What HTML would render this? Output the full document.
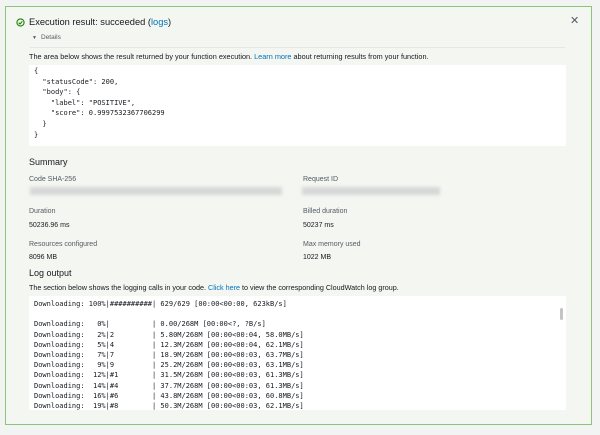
<!DOCTYPE html>
<html><head><style>
*{margin:0;padding:0;box-sizing:border-box}
body{width:600px;height:435px;background:#f2f3f3;font-family:"Liberation Sans",sans-serif;color:#16191f;position:relative;overflow:hidden}
.panel{position:absolute;left:5px;top:6px;width:587px;height:419px;border:1px solid #8fc27a;background:#f3f6f1}
.a{position:absolute;white-space:nowrap}
.lbl{font-size:7px;color:#545b64}
.val{font-size:7px;color:#16191f}
.mono{font-family:"DejaVu Sans Mono","Liberation Mono",monospace;font-size:7px;line-height:10px;color:#16191f;white-space:pre}
a{color:#0073bb;text-decoration:none}
.blur{position:absolute;height:8px;background:#d6d8d8;filter:blur(1.5px)}
</style></head><body>
<div class="panel"></div>
<svg class="a" style="left:16px;top:18px" width="9" height="9" viewBox="0 0 10 10"><circle cx="5" cy="5" r="4" fill="none" stroke="#1d8102" stroke-width="1.2"/><path d="M3 5.2 L4.5 6.6 L7 3.8" fill="none" stroke="#1d8102" stroke-width="1.2"/></svg>
<div class="a" style="left:29px;top:17px;font-size:9.3px">Execution result: succeeded (<a>logs</a>)</div>
<div class="a" style="left:570px;top:14px;font-size:11px;color:#545b64">✕</div>
<div class="a" style="left:32px;top:35px;font-size:5px;color:#545b64">▼</div>
<div class="a" style="left:41px;top:34px;font-size:6.5px;color:#545b64">Details</div>
<div class="a" style="left:30px;top:47px;width:535px;height:1px;background:#e4e7e4"></div>
<div class="a" style="left:29px;top:52px;font-size:7.3px">The area below shows the result returned by your function execution. <a>Learn more</a> about returning results from your function.</div>
<div class="a" style="left:29px;top:65px;width:537px;height:81px;background:#fff"></div>
<div class="a mono" style="left:34px;top:66px;line-height:10.6px">{
  "statusCode": 200,
  "body": {
    "label": "POSITIVE",
    "score": 0.9997532367706299
  }
}</div>
<div class="a" style="left:29px;top:157px;font-size:9px">Summary</div>
<div class="a lbl" style="left:29px;top:176px">Code SHA-256</div>
<div class="a lbl" style="left:303px;top:176px">Request ID</div>
<div class="blur" style="left:30px;top:187px;width:252px"></div>
<div class="blur" style="left:302px;top:187px;width:138px"></div>
<div class="a lbl" style="left:29px;top:208px">Duration</div>
<div class="a lbl" style="left:303px;top:208px">Billed duration</div>
<div class="a val" style="left:29px;top:222px">50236.96 ms</div>
<div class="a val" style="left:303px;top:222px">50237 ms</div>
<div class="a lbl" style="left:29px;top:241px">Resources configured</div>
<div class="a lbl" style="left:303px;top:241px">Max memory used</div>
<div class="a val" style="left:29px;top:254px">8096 MB</div>
<div class="a val" style="left:303px;top:254px">1022 MB</div>
<div class="a" style="left:29px;top:268px;font-size:9px">Log output</div>
<div class="a" style="left:29px;top:283px;font-size:7.2px">The section below shows the logging calls in your code. <a>Click here</a> to view the corresponding CloudWatch log group.</div>
<div class="a" style="left:29px;top:296px;width:537px;height:114px;background:#fff;overflow:hidden">
<div class="a mono" style="left:5px;top:3px;line-height:10.2px">Downloading: 100%|##########| 629/629 [00:00&lt;00:00, 623kB/s]

Downloading:   0%|          | 0.00/268M [00:00&lt;?, ?B/s]
Downloading:   2%|2         | 5.80M/268M [00:00&lt;00:04, 58.0MB/s]
Downloading:   5%|4         | 12.3M/268M [00:00&lt;00:04, 62.1MB/s]
Downloading:   7%|7         | 18.9M/268M [00:00&lt;00:03, 63.7MB/s]
Downloading:   9%|9         | 25.2M/268M [00:00&lt;00:03, 63.1MB/s]
Downloading:  12%|#1        | 31.5M/268M [00:00&lt;00:03, 61.3MB/s]
Downloading:  14%|#4        | 37.7M/268M [00:00&lt;00:03, 61.3MB/s]
Downloading:  16%|#6        | 43.8M/268M [00:00&lt;00:03, 60.8MB/s]
Downloading:  19%|#8        | 50.3M/268M [00:00&lt;00:03, 62.1MB/s]</div>
<div class="a" style="left:531px;top:12px;width:3px;height:12px;background:#c4c4c4;border-radius:2px"></div>
</div>
</body></html>
